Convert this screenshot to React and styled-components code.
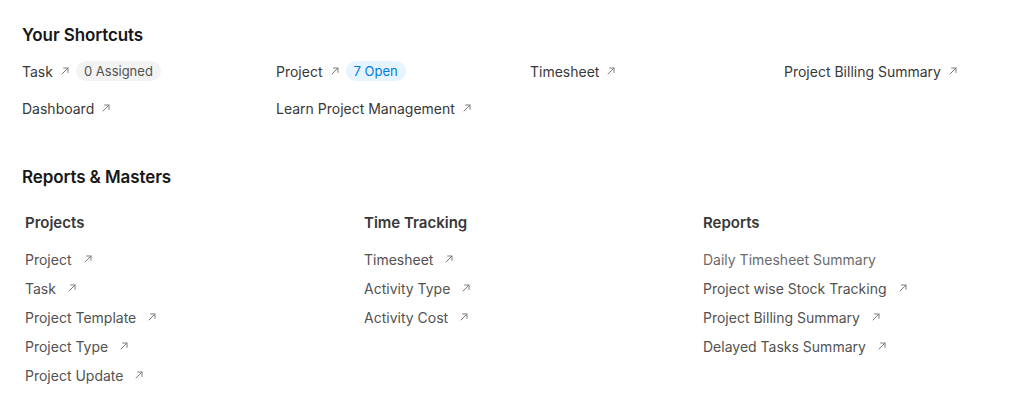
import React from 'react';
import styled, { createGlobalStyle } from 'styled-components';

const GlobalStyle = createGlobalStyle`
  body {
    margin: 0;
    background: #ffffff;
    font-family: Inter, "Noto Sans", sans-serif;
    -webkit-font-smoothing: antialiased;
  }
`;

const Page = styled.main`
  padding: 25px 0 0 22px;
  width: 1035px;
  box-sizing: border-box;
`;

const SectionTitle = styled.h2`
  margin: 0;
  font-size: 17px;
  line-height: 20px;
  font-weight: 600;
  color: #171717;
  letter-spacing: -0.1px;
`;

const ShortcutGrid = styled.div`
  display: grid;
  grid-template-columns: repeat(4, 254px);
  row-gap: 17px;
  margin: 16px 0 49px;
`;

const Shortcut = styled.a`
  display: flex;
  align-items: center;
  height: 20px;
  font-size: 14px;
  color: #383838;
  text-decoration: none;
  white-space: nowrap;

  svg {
    margin-left: 8px;
  }
`;

const Pill = styled.span`
  display: inline-flex;
  align-items: center;
  height: 20px;
  margin-left: 7px;
  padding: 0 8px;
  border-radius: 10px;
  font-size: 13px;
  background: ${(p) => (p.$tone === 'blue' ? '#e6f4ff' : '#f3f3f3')};
  color: ${(p) => (p.$tone === 'blue' ? '#007be0' : '#525252')};
`;

const CardGrid = styled.div`
  display: grid;
  grid-template-columns: repeat(3, 339px);
  margin-top: 26px;
  padding-left: 3px;
`;

const Card = styled.section`
  display: flex;
  flex-direction: column;
`;

const CardTitle = styled.h3`
  margin: 0 0 16px;
  font-size: 15px;
  line-height: 20px;
  font-weight: 600;
  color: #383838;
`;

const LinkList = styled.div`
  display: flex;
  flex-direction: column;
  gap: 9px;
`;

const LinkItem = styled.a`
  display: flex;
  align-items: center;
  height: 20px;
  font-size: 14px;
  color: ${(p) => (p.$muted ? '#6b6b6b' : '#525252')};
  text-decoration: none;
  white-space: nowrap;

  svg {
    margin-left: 12px;
  }
`;

const Arrow = () => (
  <svg width="8" height="8" viewBox="0 0 8 8" fill="none">
    <path
      d="M1 7L7 1M2.6 1H7V5.4"
      stroke="#7c7c7c"
      strokeWidth="1"
      strokeLinecap="round"
      strokeLinejoin="round"
    />
  </svg>
);

const shortcuts = [
  { label: 'Task', pill: '0 Assigned' },
  { label: 'Project', pill: '7 Open', tone: 'blue' },
  { label: 'Timesheet' },
  { label: 'Project Billing Summary' },
  { label: 'Dashboard' },
  { label: 'Learn Project Management' },
];

const cards = [
  {
    title: 'Projects',
    links: ['Project', 'Task', 'Project Template', 'Project Type', 'Project Update'],
  },
  {
    title: 'Time Tracking',
    links: ['Timesheet', 'Activity Type', 'Activity Cost'],
  },
  {
    title: 'Reports',
    links: [
      { label: 'Daily Timesheet Summary', muted: true },
      'Project wise Stock Tracking',
      'Project Billing Summary',
      'Delayed Tasks Summary',
    ],
  },
];

export default () => {
  return (
    <Page>
      <GlobalStyle />
      <SectionTitle>Your Shortcuts</SectionTitle>
      <ShortcutGrid>
        {shortcuts.map((s) => (
          <Shortcut key={s.label}>
            {s.label}
            <Arrow />
            {s.pill && <Pill $tone={s.tone}>{s.pill}</Pill>}
          </Shortcut>
        ))}
      </ShortcutGrid>

      <SectionTitle>Reports &amp; Masters</SectionTitle>
      <CardGrid>
        {cards.map((card) => (
          <Card key={card.title}>
            <CardTitle>{card.title}</CardTitle>
            <LinkList>
              {card.links.map((l) => {
                const link = typeof l === 'string' ? { label: l } : l;
                return (
                  <LinkItem key={link.label} $muted={link.muted}>
                    {link.label}
                    {!link.muted && <Arrow />}
                  </LinkItem>
                );
              })}
            </LinkList>
          </Card>
        ))}
      </CardGrid>
    </Page>
  );
};
